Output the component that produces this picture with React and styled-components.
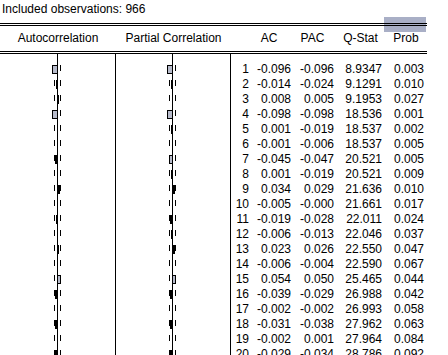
import React from "react";
import styled, { createGlobalStyle } from "styled-components";

const ROW = 15;
const PAD = 8;
const SCALE = 52;

const rows = [
  [1, "-0.096", "-0.096", "8.9347", "0.003"],
  [2, "-0.014", "-0.024", "9.1291", "0.010"],
  [3, "0.008", "0.005", "9.1953", "0.027"],
  [4, "-0.098", "-0.098", "18.536", "0.001"],
  [5, "0.001", "-0.019", "18.537", "0.002"],
  [6, "-0.001", "-0.006", "18.537", "0.005"],
  [7, "-0.045", "-0.047", "20.521", "0.005"],
  [8, "0.001", "-0.019", "20.521", "0.009"],
  [9, "0.034", "0.029", "21.636", "0.010"],
  [10, "-0.005", "-0.000", "21.661", "0.017"],
  [11, "-0.019", "-0.028", "22.011", "0.024"],
  [12, "-0.006", "-0.013", "22.046", "0.037"],
  [13, "0.023", "0.026", "22.550", "0.047"],
  [14, "-0.006", "-0.004", "22.590", "0.067"],
  [15, "0.054", "0.050", "25.465", "0.044"],
  [16, "-0.039", "-0.029", "26.988", "0.042"],
  [17, "-0.002", "-0.002", "26.993", "0.058"],
  [18, "-0.031", "-0.038", "27.962", "0.063"],
  [19, "-0.002", "0.001", "27.964", "0.084"],
  [20, "-0.029", "-0.034", "28.786", "0.092"],
];

const GlobalStyle = createGlobalStyle`
  body {
    margin: 0;
    background: #fff;
    overflow: hidden;
    font-family: "Liberation Sans", Arial, sans-serif;
    font-size: 12px;
    color: #000;
  }
`;

const Page = styled.div`
  position: relative;
  width: 448px;
  height: 355px;
  overflow: hidden;
`;

const Info = styled.div`
  height: 23px;
  line-height: 19px;
  padding-left: 2px;
`;

const Highlight = styled.div`
  position: absolute;
  top: 17px;
  left: 384px;
  width: 42px;
  height: 15px;
  background: #a9afc6;
`;

const Table = styled.div`
  position: relative;
  z-index: 1;
  width: 427px;
  border-top: 3px double #000;
`;

const Header = styled.div`
  display: grid;
  grid-template-columns: 116px 115px 196px;
  height: 25px;
  line-height: 25px;
  border-bottom: 3px double #000;
`;

const HeadTitle = styled.div`
  text-align: center;
  white-space: nowrap;
`;

const StatHead = styled.div`
  display: grid;
  grid-template-columns: 18px 40px 47px 49px 42px;
  text-align: center;
`;

const Body = styled.div`
  display: flex;
`;

const ChartColumn = styled.div`
  width: ${(p) => p.$width}px;
  border-right: 1px solid #000;
  height: 320px;
  svg {
    display: block;
  }
`;

const NumColumn = styled.div`
  width: 196px;
  padding-top: ${PAD}px;
`;

const NumRow = styled.div`
  display: grid;
  grid-template-columns: 18px 42px 43px 48px 42px;
  height: ${ROW}px;
  line-height: ${ROW}px;
  text-align: right;
  white-space: nowrap;
`;

const barWidth = (v) => Math.round(Math.abs(v) * SCALE + 0.15);

const Correlogram = ({ values, axis, width }) => {
  const h = 320;
  return (
    <svg width={width} height={h}>
      <rect x={axis} y={0} width={1} height={h} fill="#000" />
      {values.map((v, i) => {
        const top = PAD + i * ROW;
        const w = barWidth(v);
        let bar = null;
        if (w >= 3) {
          bar = (
            <rect
              x={(v < 0 ? axis - w : axis) + 0.5}
              y={top + 3.5}
              width={w}
              height={8}
              fill="#b7bbcb"
              stroke="#000"
            />
          );
        } else if (w > 0) {
          bar = (
            <rect
              x={v < 0 ? axis - w : axis + 1}
              y={top + 3}
              width={w}
              height={9}
              fill="#000"
            />
          );
        }
        return (
          <g key={i}>
            <rect x={axis - 3} y={top + 3} width={1} height={6} fill="#000" />
            <rect x={axis + 3} y={top + 3} width={1} height={6} fill="#000" />
            {bar}
          </g>
        );
      })}
    </svg>
  );
};

export default function App() {
  const ac = rows.map((r) => parseFloat(r[1]));
  const pac = rows.map((r) => parseFloat(r[2]));
  return (
    <Page>
      <GlobalStyle />
      <Highlight />
      <Info>Included observations: 966</Info>
      <Table>
        <Header>
          <HeadTitle>Autocorrelation</HeadTitle>
          <HeadTitle>Partial Correlation</HeadTitle>
          <StatHead>
            <span />
            <span>AC</span>
            <span>PAC</span>
            <span>Q-Stat</span>
            <span>Prob</span>
          </StatHead>
        </Header>
        <Body>
          <ChartColumn $width={115}>
            <Correlogram values={ac} axis={57} width={115} />
          </ChartColumn>
          <ChartColumn $width={114}>
            <Correlogram values={pac} axis={56} width={114} />
          </ChartColumn>
          <NumColumn>
            {rows.map((r) => (
              <NumRow key={r[0]}>
                <span>{r[0]}</span>
                <span>{r[1]}</span>
                <span>{r[2]}</span>
                <span>{r[3]}</span>
                <span>{r[4]}</span>
              </NumRow>
            ))}
          </NumColumn>
        </Body>
      </Table>
    </Page>
  );
}
